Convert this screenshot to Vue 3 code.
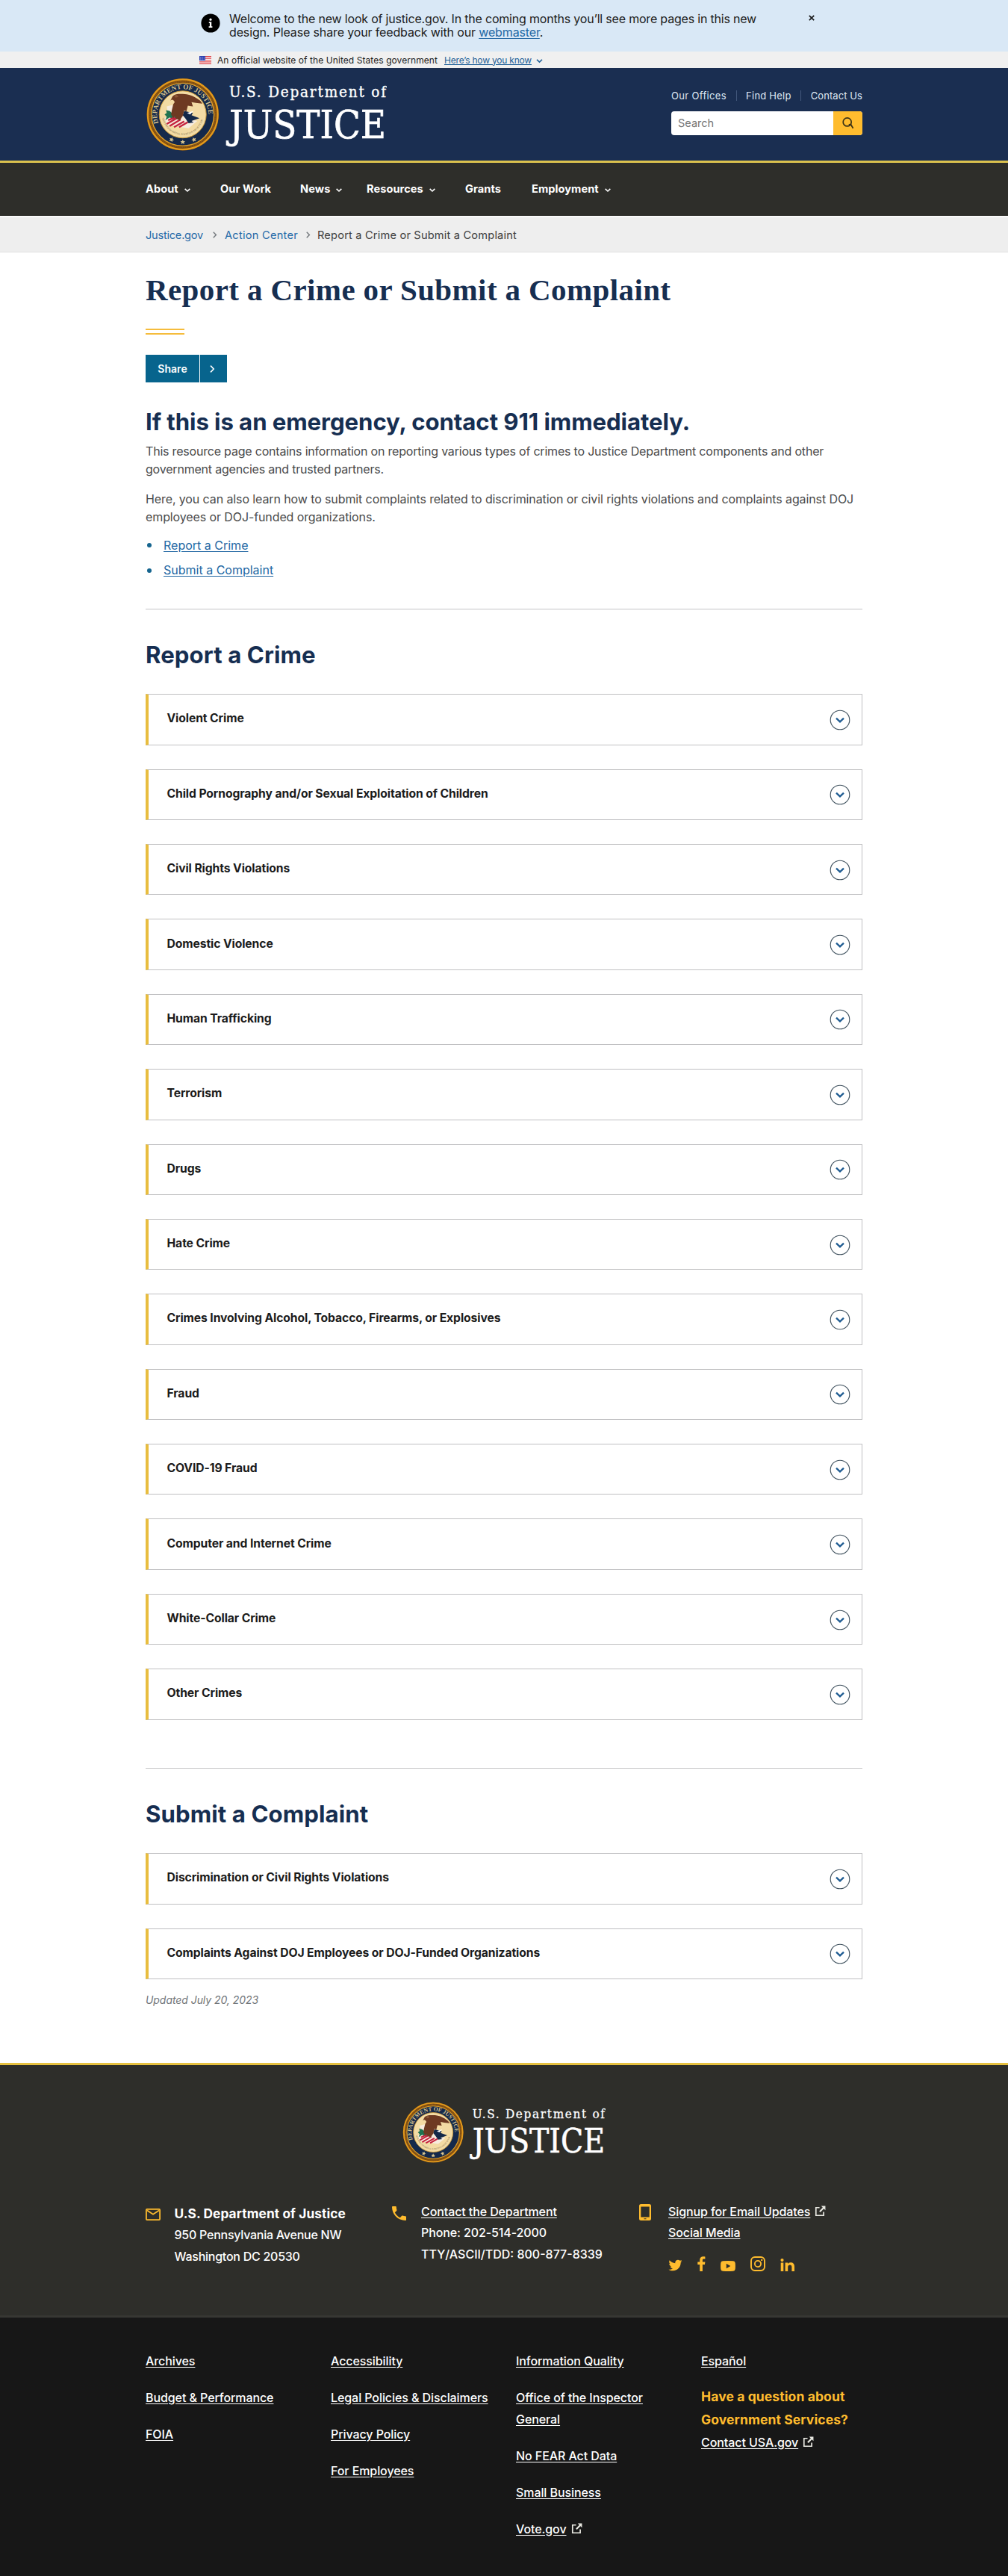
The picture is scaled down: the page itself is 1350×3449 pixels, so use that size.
<script setup>
const navItems = [
  { label: 'About', menu: true },
  { label: 'Our Work' },
  { label: 'News', menu: true },
  { label: 'Resources', menu: true },
  { label: 'Grants' },
  { label: 'Employment', menu: true },
]

const sections = [
  {
    title: 'Report a Crime',
    items: [
      'Violent Crime',
      'Child Pornography and/or Sexual Exploitation of Children',
      'Civil Rights Violations',
      'Domestic Violence',
      'Human Trafficking',
      'Terrorism',
      'Drugs',
      'Hate Crime',
      'Crimes Involving Alcohol, Tobacco, Firearms, or Explosives',
      'Fraud',
      'COVID-19 Fraud',
      'Computer and Internet Crime',
      'White-Collar Crime',
      'Other Crimes',
    ],
  },
  {
    title: 'Submit a Complaint',
    items: [
      'Discrimination or Civil Rights Violations',
      'Complaints Against DOJ Employees or DOJ-Funded Organizations',
    ],
  },
]

const footerLinks = [
  [{ label: 'Archives' }, { label: 'Budget & Performance' }, { label: 'FOIA' }],
  [
    { label: 'Accessibility' },
    { label: 'Legal Policies & Disclaimers' },
    { label: 'Privacy Policy' },
    { label: 'For Employees' },
  ],
  [
    { label: 'Information Quality' },
    { label: 'Office of the Inspector General' },
    { label: 'No FEAR Act Data' },
    { label: 'Small Business' },
    { label: 'Vote.gov', external: true },
  ],
]
</script>

<template>
  <div class="page">
    <svg class="defs" width="0" height="0" aria-hidden="true">
      <path id="seal-top" d="M16.7 62 A35.3 35.3 0 1 1 83.3 62" fill="none" />
      <path id="seal-motto" d="M22 55 A28.5 28.5 0 0 0 78 55" fill="none" />
      <symbol id="seal" viewBox="0 0 100 100">
        <circle cx="50" cy="50" r="49.5" fill="#7a4a12" />
        <circle cx="50" cy="50" r="48" fill="none" stroke="#e39a1c" stroke-width="2.4" />
        <circle cx="50" cy="50" r="45" fill="none" stroke="#8f5a17" stroke-width="2" stroke-dasharray="1.5 1" />
        <circle cx="50" cy="50" r="43" fill="#15294b" stroke="#e0a02a" stroke-width="1.4" />
        <g fill="#d9c590">
          <path id="seal-star" d="M50 84.5l1 2.1 2.4.2-1.8 1.6.6 2.3-2.2-1.2-2.2 1.2.6-2.3-1.8-1.6 2.4-.2z" />
          <use href="#seal-star" transform="rotate(24 50 50)" />
          <use href="#seal-star" transform="rotate(-24 50 50)" />
        </g>
        <circle cx="50" cy="50" r="32.3" fill="#f3dba4" stroke="#c99635" stroke-width="1" />
        <path d="M28 39l8-2 4 9 17 10 13 3-12 10-30-5-3-9 5-3z" fill="#f7ecdf" />
        <path d="M27 44l5 1 3 3 3-1 2 5 3 4-5 1-6-3-6 4 2-5-3-3 3-2z" fill="#1f7350" />
        <path d="M28 63l14-8M32 66l15-9M38 67.5l14-8M45 67.5l12-7M30 58l9-4" stroke="#c4233e" stroke-width="2.4" fill="none" />
        <path d="M52 45l12 3-2 3 11 4-11 4 3 2-7 1-4-6-4-5z" fill="#132849" />
        <path d="M56 48l9-3-5 5z" fill="#fff" />
        <path d="M36 25c4-4 11-3 17-3 9 1 14 4 21 9l3 4-9-1-6-1 2 6-7-1-2 8-3-2-2 8-4 6-5-2-2-4-2 3-3-5 1-6 2-8 2-3c-2-4-4-4-6-2z" fill="#6e3a22" />
        <path d="M38 24l4-1 2 3-4 1z" fill="#8c5637" />
      </symbol>
      <symbol id="chev-down" viewBox="0 0 12 8">
        <path d="M2 2l4 3.8L10 2" fill="none" stroke="currentColor" stroke-width="1.9" />
      </symbol>
      <symbol id="chev-right" viewBox="0 0 8 12">
        <path d="M2 1.6L6.2 6 2 10.4" fill="none" stroke="currentColor" stroke-width="1.6" />
      </symbol>
      <symbol id="external" viewBox="0 0 16 16">
        <path d="M7 2.9H1.9v11.2h11V9" fill="none" stroke="currentColor" stroke-width="1.8" />
        <path d="M9.4.6H15.4V6.6L13.2 4.4 8.2 9.6 6.5 7.9 11.6 2.8z" fill="currentColor" />
      </symbol>
    </svg>

    <div class="welcome">
      <div class="welcome-in">
        <svg class="info" viewBox="0 0 26 26">
          <circle cx="13" cy="13" r="12.6" fill="#000" />
          <circle cx="13" cy="8.2" r="1.6" fill="#fff" />
          <path d="M10.8 11.2h3.4v6h1.2v1.7h-4.8v-1.7h1.3v-4.3h-1.1z" fill="#fff" />
        </svg>
        <p>
          <span class="first">Welcome to the new look of justice.gov. In the coming months you’ll see more pages in this new</span><br />
          design. Please share your feedback with our <a class="link">webmaster</a>.
        </p>
        <svg class="close" viewBox="0 0 10 10"><path d="M1.8 1.8l6.4 6.4M8.2 1.8L1.8 8.2" stroke="#1b1b1b" stroke-width="1.7" /></svg>
      </div>
    </div>

    <div class="gov">
      <div class="gov-in">
        <svg class="flag" viewBox="0 0 16 11">
          <rect width="16" height="11" fill="#fff" />
          <path d="M0 .7h16M0 3.1h16M0 5.5h16M0 7.9h16M0 10.3h16" stroke="#dc3f44" stroke-width="1.2" />
          <rect width="8" height="6.2" fill="#2b3fae" />
          <path d="M1 1.6h6M1 3.2h6M1 4.8h6" stroke="#c5cdf3" stroke-width=".7" stroke-dasharray=".8 .9" />
        </svg>
        <span class="gov-text">An official website of the United States government</span>
        <a class="gov-link">Here’s how you know</a>
        <svg class="gov-chev"><use href="#chev-down" /></svg>
      </div>
    </div>

    <header>
      <div class="wrap head">
        <svg class="logo" viewBox="0 0 323 99">
          <g transform="translate(1 .5) scale(.975)">
            <use href="#seal" width="100" height="100" />
            <text class="seal-text"><textPath href="#seal-top" textLength="122" lengthAdjust="spacingAndGlyphs">DEPARTMENT OF JUSTICE</textPath></text>
            <text class="seal-motto"><textPath href="#seal-motto" textLength="76" lengthAdjust="spacingAndGlyphs">QUI PRO DOMINA JUSTITIA SEQUITUR</textPath></text>
          </g>
          <text class="logo-a" x="112" y="26" textLength="210">U.S. Department of</text>
          <text class="logo-b" x="112" y="80.5" textLength="210" lengthAdjust="spacingAndGlyphs">JUSTICE</text>
        </svg>
        <div class="tools">
          <div class="utility">
            <a class="u1">Our Offices</a><i></i><a class="u2">Find Help</a><i></i><a class="u3">Contact Us</a>
          </div>
          <div class="search">
            <span>Search</span>
            <button aria-label="Search">
              <svg viewBox="0 0 18 18"><circle cx="7.7" cy="7.4" r="5.5" fill="none" stroke="#3a3216" stroke-width="1.7" /><path d="M9.8 11.2l2.6-.6 3.2 5.2" fill="none" stroke="#3a3216" stroke-width="1.8" /></svg>
            </button>
          </div>
        </div>
      </div>
    </header>

    <nav>
      <div class="wrap nav-in">
        <a v-for="n in navItems" :key="n.label">{{ n.label }}<svg v-if="n.menu"><use href="#chev-down" /></svg></a>
      </div>
    </nav>

    <div class="crumbs">
      <div class="wrap crumbs-in">
        <a class="c1">Justice.gov</a><svg><use href="#chev-right" /></svg>
        <a class="c2">Action Center</a><svg><use href="#chev-right" /></svg>
        <span>Report a Crime or Submit a Complaint</span>
      </div>
    </div>

    <main class="wrap">
      <h1>Report a Crime or Submit a Complaint</h1>
      <div class="bars"></div>
      <button class="share"><span>Share</span><svg><use href="#chev-right" /></svg></button>

      <h2 class="emergency">If this is an emergency, contact 911 immediately.</h2>
      <p class="p1">This resource page contains information on reporting various types of crimes to Justice Department components and other<br />government agencies and trusted partners.</p>
      <p class="p2">Here, you can also learn how to submit complaints related to discrimination or civil rights violations and complaints against DOJ<br />employees or DOJ-funded organizations.</p>
      <ul class="toc">
        <li v-for="s in sections" :key="s.title"><a class="link">{{ s.title }}</a></li>
      </ul>

      <section v-for="s in sections" :key="s.title">
        <h2>{{ s.title }}</h2>
        <div v-for="item in s.items" :key="item" class="acc">
          <span>{{ item }}</span>
          <svg viewBox="0 0 28 28">
            <circle cx="14" cy="14" r="12.8" fill="#fff" stroke="#3d4f5c" stroke-width="1.1" />
            <path d="M9 11.7l5 4.7 5-4.7" fill="none" stroke="#1f5c92" stroke-width="2.3" />
          </svg>
        </div>
      </section>

      <p class="updated">Updated July 20, 2023</p>
    </main>

    <footer>
      <div class="foot-top">
        <svg class="foot-logo" viewBox="0 0 328 99">
          <g transform="scale(.99)">
            <use href="#seal" width="100" height="100" />
            <text class="seal-text"><textPath href="#seal-top" textLength="122" lengthAdjust="spacingAndGlyphs">DEPARTMENT OF JUSTICE</textPath></text>
            <text class="seal-motto"><textPath href="#seal-motto" textLength="76" lengthAdjust="spacingAndGlyphs">QUI PRO DOMINA JUSTITIA SEQUITUR</textPath></text>
          </g>
          <text class="logo-a" x="113" y="26.5" textLength="214">U.S. Department of</text>
          <text class="logo-b" x="113" y="82.5" textLength="214" lengthAdjust="spacingAndGlyphs">JUSTICE</text>
        </svg>
        <div class="wrap contact">
          <div class="col">
            <svg class="mail" viewBox="0 0 20 16"><rect x=".9" y=".9" width="18.2" height="14.2" rx="1" fill="none" stroke="currentColor" stroke-width="1.8" /><path d="M2 2.6l8 5.2 8-5.2" fill="none" stroke="currentColor" stroke-width="1.8" /></svg>
            <div class="addr">
              <strong>U.S. Department of Justice</strong>
              <span>950 Pennsylvania Avenue NW</span>
              <span>Washington DC 20530</span>
            </div>
          </div>
          <div class="col">
            <svg class="phone" viewBox="3 3 18 18"><path d="M6.62 10.79c1.44 2.83 3.76 5.14 6.59 6.59l2.2-2.2c.27-.27.67-.36 1.02-.24 1.12.37 2.33.57 3.57.57.55 0 1 .45 1 1V20c0 .55-.45 1-1 1-9.39 0-17-7.61-17-17 0-.55.45-1 1-1h3.5c.55 0 1 .45 1 1 0 1.25.2 2.45.57 3.57.11.35.03.74-.25 1.02z" fill="currentColor" /></svg>
            <div class="lines">
              <a>Contact the Department</a>
              <span>Phone: 202-514-2000</span>
              <span class="tty">TTY/ASCII/TDD: 800-877-8339</span>
            </div>
          </div>
          <div class="col">
            <svg class="mobile" viewBox="0 0 16 22"><path fill-rule="evenodd" d="M2.5 0h11A2.5 2.5 0 0 1 16 2.5v17a2.5 2.5 0 0 1-2.5 2.5h-11A2.5 2.5 0 0 1 0 19.5v-17A2.5 2.5 0 0 1 2.5 0zM2.3 3.6v14h11.4v-14zM6.5 19.2v1h3v-1z" fill="currentColor" /></svg>
            <div class="lines">
              <span><a>Signup for Email Updates</a><svg class="ext"><use href="#external" /></svg></span>
              <a>Social Media</a>
              <div class="social">
                <svg width="19" height="16" viewBox="1 3.5 22 18"><path fill="currentColor" d="M22.46 6c-.77.35-1.6.58-2.46.69.88-.53 1.56-1.37 1.88-2.38-.83.5-1.75.85-2.72 1.05C18.37 4.5 17.26 4 16 4c-2.35 0-4.27 1.92-4.27 4.29 0 .34.04.67.11.98C8.28 9.09 5.11 7.38 3 4.79c-.37.63-.58 1.37-.58 2.15 0 1.49.75 2.81 1.91 3.56-.71 0-1.37-.2-1.95-.5v.03c0 2.08 1.48 3.82 3.44 4.21a4.22 4.22 0 0 1-1.93.07 4.28 4.28 0 0 0 4 2.98 8.521 8.521 0 0 1-5.33 1.84c-.34 0-.68-.02-1.02-.06C3.44 20.29 5.7 21 8.12 21 16 21 20.33 14.46 20.33 8.79c0-.19 0-.37-.01-.56.84-.6 1.56-1.36 2.14-2.23z" /></svg>
                <svg width="11" height="20" viewBox="0 0 11 20"><path fill="currentColor" d="M3.2 20v-9H.3V7.6h2.9V5C3.2 1.9 5 .3 7.8.3c1.2 0 2.2.1 2.6.2v3H8.600C7.200 3.500 6.900 4.200 6.900 5.200v2.400h3.500L9.900 11h-3v9z" /></svg>
                <svg width="20" height="14" viewBox="0 0 20 14"><path fill="currentColor" fill-rule="evenodd" d="M3 .3Q10-.3 17 .3 19.5.5 19.7 3q.4 4 0 8-.2 2.500-2.700 2.700-7 .5-14 0Q.5 13.500.3 11q-.4-4 0-8Q.5.5 3 .3zM7.800 3.800v6.400L13.300 7z" /></svg>
                <svg width="20" height="20" viewBox="0 0 20 20"><rect x="1" y="1" width="18" height="18" rx="5" fill="none" stroke="currentColor" stroke-width="1.9" /><circle cx="10" cy="10" r="4.1" fill="none" stroke="currentColor" stroke-width="1.8" /><circle cx="15.200" cy="4.900" r="1.200" fill="currentColor" /></svg>
                <svg width="20" height="17" viewBox="0 0 20 17"><path fill="currentColor" d="M.7 5.600h3.600V17H.7zM2.500 0a2.100 2.100 0 1 1 0 4.200 2.100 2.100 0 0 1 0-4.200zM6.600 5.600H10v1.600c.6-1.100 1.800-1.900 3.700-1.900 3.600 0 5.300 2 5.300 5.600V17h-3.600v-5.600c0-1.700-.7-2.800-2.400-2.800-1.800 0-2.800 1.200-2.800 3V17H6.600z" /></svg>
              </div>
            </div>
          </div>
        </div>
      </div>
      <div class="foot-bottom">
        <div class="wrap links">
          <ul v-for="(col, i) in footerLinks" :key="i">
            <li v-for="l in col" :key="l.label"><a>{{ l.label }}</a><svg v-if="l.external" class="ext"><use href="#external" /></svg></li>
          </ul>
          <div class="last">
            <a>Español</a>
            <h3>Have a question about<br />Government Services?</h3>
            <div><a>Contact USA.gov</a><svg class="ext"><use href="#external" /></svg></div>
          </div>
        </div>
      </div>
    </footer>
  </div>
</template>

<style>
body { margin: 0; background: #fff; }
</style>

<style scoped>
.page { font-family: Inter, 'Liberation Sans', sans-serif; font-size: 16px; color: #1b1b1b; }
.page *, .page { box-sizing: border-box; }
.defs { position: absolute; }
p, h1, h2, h3, ul { margin: 0; padding: 0; }
ul { list-style: none; }
.wrap { width: 960px; margin: 0 auto; }
.link { color: #2267a3; text-decoration: underline; text-underline-offset: 2px; }

.welcome { height: 69px; background: #d9e8f6; }
.welcome-in { width: 824px; margin: 0 auto; padding-top: 15.5px; padding-left: 6px; display: flex; align-items: flex-start; line-height: 18px; letter-spacing: -.14px; }
.info { width: 26px; height: 26px; margin: 2px 12px 0 0; }
.first { letter-spacing: -.195px; }
.close { width: 10px; height: 10px; margin: 3px -5px 0 auto; }
.welcome-in p { width: 766px; white-space: nowrap; }

.gov { height: 22px; background: #f0f0f0; }
.gov-in { width: 816px; margin: 0 auto; height: 22px; display: flex; align-items: center; font-size: 12px; }
.flag { width: 16px; height: 11px; margin-right: 8px; }
.gov-text { letter-spacing: .072px; width: 304px; white-space: nowrap; }
.gov-link { color: #1d5f97; text-decoration: underline; letter-spacing: -.2px; width: 118px; white-space: nowrap; }
.gov-chev { width: 11px; height: 7px; margin: 3px 0 0 4px; color: #1d5f97; }

header { height: 127px; background: #1a2e51; border-bottom: 3px solid #dcc24e; }
.head { display: flex; justify-content: space-between; padding-top: 13px; }
.logo { width: 323px; height: 99px; }
.logo-a, .logo-b { fill: #fff; stroke: #fff; font-family: 'DejaVu Serif Condensed', 'DejaVu Serif', serif; font-stretch: condensed; }
.logo-a { font-size: 20.5px; stroke-width: .35px; }
.logo-b { font-size: 53px; stroke-width: .7px; }
.seal-text { font: 700 9.5px 'Liberation Serif', serif; fill: #d3c08d; }
.seal-motto { font: 3.4px 'Liberation Serif', serif; fill: #7d6a45; }
.tools { width: 256px; padding-top: 15px; }
.utility { display: flex; align-items: center; justify-content: space-between; height: 18px; font-size: 13px; color: #dfe9f5; white-space: nowrap; }
.utility i { width: 1px; height: 14px; background: #43587c; }
.u1 { letter-spacing: .34px; }
.u2 { letter-spacing: .23px; }
.u3 { letter-spacing: .08px; }
.search { display: flex; height: 32px; margin-top: 12px; background: #fff; border-radius: 4px; overflow: hidden; }
.search span { flex: 1; padding-left: 9px; line-height: 32px; font-size: 14.5px; color: #757575; }
.search button { width: 39px; border: 0; padding: 0; background: #ffbc2e; display: flex; align-items: center; justify-content: center; }
.search svg { width: 18px; height: 18px; }

nav { height: 71px; background: #2e2e2a; }
.nav-in { display: grid; grid-template-columns: 100px 107px 89px 132px 89px auto; height: 71px; padding-bottom: 2px; align-items: center; font-weight: 700; font-size: 14.6px; color: #fff; letter-spacing: .05px; }
.nav-in a { display: flex; align-items: center; white-space: nowrap; }
.nav-in svg { width: 10px; height: 7px; margin: 3px 0 0 7px; }

.crumbs { height: 49px; background: #eee; border-top: 2px solid #fafafa; border-bottom: 1px solid #e0e0e0; }
.crumbs-in { display: flex; align-items: center; height: 46px; padding-top: 1px; font-size: 14.6px; color: #3d3d3d; white-space: nowrap; }
.crumbs-in svg { width: 7px; height: 11px; color: #71767a; }
.crumbs a { color: #1f69a8; }
.c1 { letter-spacing: -.24px; width: 89px; }
.c2 { letter-spacing: .26px; width: 108px; margin-left: 10px; }
.crumbs-in span { margin-left: 9px; letter-spacing: .19px; padding-top: 1px; }

h1 { margin-top: 25px; font: 700 41px/50px 'Liberation Serif', serif; letter-spacing: .39px; color: #162e51; }
.bars { width: 52px; height: 8px; margin-top: 27px; border-top: 2px solid #f5bc3c; border-bottom: 2px solid #f5bc3c; }
.share { display: flex; align-items: center; width: 109px; height: 37px; margin-top: 27px; padding: 0; border: 0; background: #07648d; color: #fff; font: 600 14px Inter, sans-serif; }
.share span { width: 73px; line-height: 37px; border-right: 1px solid #fff; letter-spacing: .05px; }
.share svg { width: 8px; height: 12px; margin-left: 12px; }
h2 { font-size: 31.2px; line-height: 38px; font-weight: 700; color: #162e51; letter-spacing: .08px; }
.emergency { margin-top: 33.6px; letter-spacing: -.088px; }
main p { line-height: 24px; color: #4a4a4a; white-space: nowrap; }
.p1 { margin-top: 8.4px; letter-spacing: -.2px; }
.p2 { margin-top: 16px; letter-spacing: -.105px; }
.toc { margin-top: 14px; }
.toc li { display: flex; align-items: center; height: 24px; margin-bottom: 9.2px; }
.toc li::before { content: ''; width: 6px; height: 6px; margin: 1px 16px 0 2px; border-radius: 50%; background: #16658f; }
section { padding-top: 41.6px; border-top: 1px solid #c4c4c6; }
.toc + section { margin-top: 40px; }
section + section { margin-top: 64.5px; }
section h2 { margin-bottom: 33.4px; }
.acc { display: flex; align-items: center; justify-content: space-between; height: 68.4px; padding: 0 15px 0 24.5px; border: 1px solid #c0c0c2; border-left: 4px solid #e8bd3f; font-weight: 700; font-size: 15.7px; letter-spacing: -.1px; }
.acc + .acc { margin-top: 32px; }
.acc span { padding-bottom: 3px; }
.acc svg { width: 28px; height: 28px; margin-top: 1px; }
main .updated { margin-top: 18px; margin-bottom: 74px; font-size: 14px; line-height: 20px; font-style: italic; letter-spacing: -.06px; color: #71767a; }

footer { color: #fff; font-weight: 500; }
footer a { text-decoration: underline; text-underline-offset: 2px; }
.foot-top { height: 338px; border-top: 3px solid #e5c03f; background: #2e2e2a; padding-top: 49px; }
.foot-logo { display: block; width: 272px; height: 82px; margin: 0 auto; }
.contact { display: grid; grid-template-columns: 330px 330px auto; margin-top: 46px; letter-spacing: -.1px; }
.col { display: flex; align-items: flex-start; }
.col > svg { color: #ffbc2e; flex: none; }
.mail { width: 20px; height: 16px; margin: 15px 18.5px 0 0; }
.phone { width: 19px; height: 19px; margin: 12px 20px 0 0; }
.mobile { width: 16px; height: 22px; margin: 9px 23px 0 1px; }
.addr { display: flex; flex-direction: column; line-height: 29px; padding-top: 7px; letter-spacing: -.25px; }
.addr strong { font-size: 17.3px; font-weight: 700; letter-spacing: .1px; }
.lines { display: flex; flex-direction: column; align-items: flex-start; line-height: 28.5px; padding-top: 5px; }
.lines > * { height: 28.5px; }
.tty { letter-spacing: 0; }
.ext { width: 15px; height: 15px; margin-left: 6px; vertical-align: -1px; color: #e9e9e2; }
.lines .social { display: flex; align-items: flex-end; height: 20px; margin-top: 17px; gap: 20px; color: #ffbc2e; }

.foot-bottom { height: 349px; border-top: 3px solid #373733; background: #171717; padding-top: 44px; }
.links { display: grid; grid-template-columns: 248px 248px 248px auto; line-height: 29px; letter-spacing: -.08px; }
.links ul { padding-right: 60px; }
.links ul:nth-child(2) { padding-right: 20px; }
.links li { margin-bottom: 20px; }
.last h3 { margin-top: 17px; font-size: 17.5px; line-height: 31.4px; font-weight: 700; letter-spacing: .1px; color: #ffbc2e; }
</style>
